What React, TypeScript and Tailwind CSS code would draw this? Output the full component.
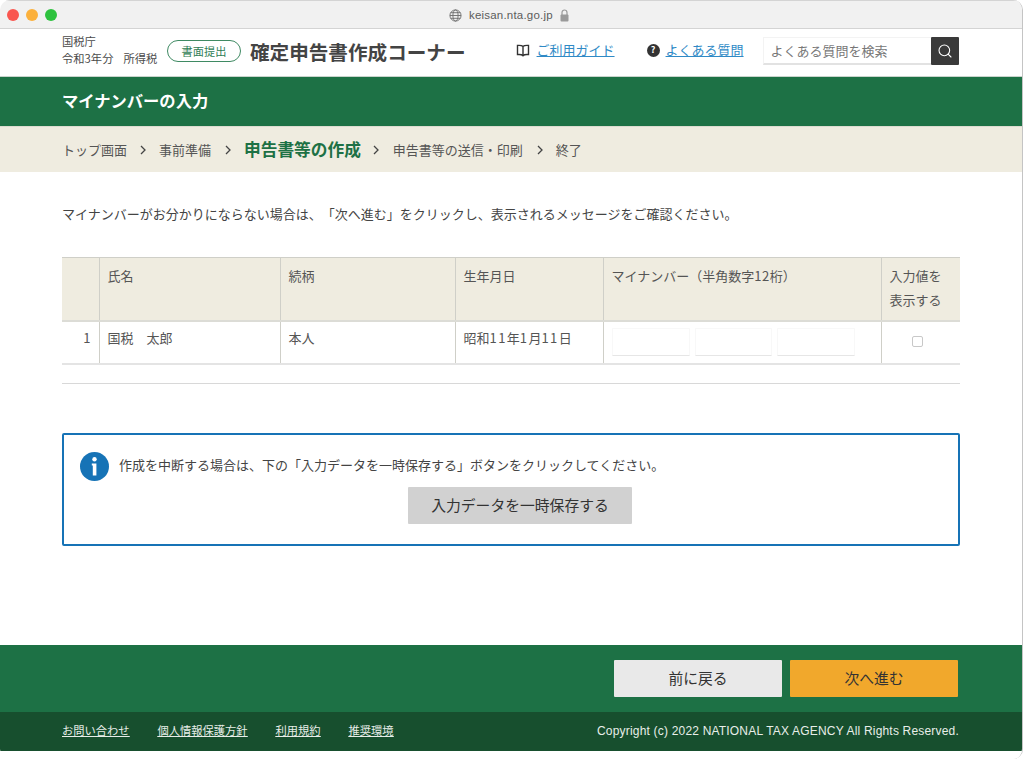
import { Search } from 'lucide-react';

const jp = '[font-family:"Noto_Sans_CJK_JP","Liberation_Sans",sans-serif]';

function Globe() {
  return (
    <svg width="13" height="13" viewBox="0 0 14 14" fill="none" stroke="#6e6e6e" strokeWidth="1">
      <circle cx="7" cy="7" r="6" />
      <ellipse cx="7" cy="7" rx="2.8" ry="6" />
      <path d="M1 7h12M1.8 4h10.4M1.8 10h10.4" />
    </svg>
  );
}

function Lock() {
  return (
    <svg width="9" height="13" viewBox="0 0 9 13" fill="none">
      <path d="M2 6V3.5a2.5 2.5 0 0 1 5 0V6" stroke="#9a9a9a" strokeWidth="1.2" />
      <rect x="0.5" y="5.5" width="8" height="7" rx="1" fill="#9a9a9a" />
    </svg>
  );
}

function BookIcon() {
  return (
    <svg width="14" height="13" viewBox="0 0 14 13" fill="none" stroke="#333" strokeWidth="1.4">
      <path d="M7 2.5C6 1.4 4 1.2 1.5 1.4v9.2c2.5-.2 4.5 0 5.5 1.1 1-1.1 3-1.3 5.5-1.1V1.4C10 1.2 8 1.4 7 2.5zM7 2.5v9.2" />
    </svg>
  );
}

function Arrow({ className }: { className: string }) {
  return (
    <svg className={className} width="6" height="10" viewBox="0 0 6 10" fill="none" stroke="#444" strokeWidth="1.3">
      <path d="M1 1l4 4-4 4" />
    </svg>
  );
}

function Dots() {
  return (
    <div className="flex gap-[7px]">
      <span className="w-3 h-3 rounded-full bg-[#f9564f]" />
      <span className="w-3 h-3 rounded-full bg-[#fbb03b]" />
      <span className="w-3 h-3 rounded-full bg-[#2ec23f]" />
    </div>
  );
}

const headCell = 'border-l border-[#cfcfc8] px-2 align-top font-normal text-left';
const bodyCell = 'border-l border-[#cfcfc8] px-2 align-top';

export default function App() {
  return (
    <div className={`w-[1024px] h-[759px] overflow-hidden bg-white ${jp} [text-spacing-trim:space-all] text-[#444]`}>
      <div className="h-[759px] mr-px border-r border-[#c4c4c4] rounded-t-[10px] rounded-b-[10px] overflow-hidden flex flex-col">
        {/* browser bar */}
        <div className="h-[29px] shrink-0 bg-[#f1f1f1] border-b border-t border-[#d4d4d4] pl-[7px] flex items-center relative">
          <Dots />
          <div className="absolute left-[449px] top-[7px] flex items-center gap-[7px] text-[11.5px] leading-[15px] text-[#5c5c5c] tracking-[0.2px] font-['Liberation_Sans',sans-serif]">
            <Globe />
            <span>keisan.nta.go.jp</span>
            <Lock />
          </div>
        </div>

        {/* header */}
        <header className="h-[48px] shrink-0 pl-[62px] flex items-center border-b border-[#c9d4cc]">
          <div className="w-[105px] text-[11.3px] leading-[17px] text-[#4a4a4a] mt-[-5px] whitespace-nowrap">
            <div>国税庁</div>
            <div>令和3年分<span className="ml-[10px]">所得税</span></div>
          </div>
          <div className="w-[74px] h-[22px] rounded-full border border-[#3f8a63] text-[#2f7d55] text-[11.2px] flex items-center justify-center mt-[-3px]">
            書面提出
          </div>
          <div className="ml-[9px] text-[19.6px] font-bold text-[#444] leading-none mt-[-1px] whitespace-nowrap">確定申告書作成コーナー</div>
          <div className="ml-[50px] flex items-center gap-[7px] mt-[-5px]">
            <BookIcon />
            <a className="text-[13px] leading-[16px] text-[#2f8ac6] underline">ご利用ガイド</a>
          </div>
          <div className="ml-[32px] flex items-center gap-[6px] mt-[-5px]">
            <span className="w-[13px] h-[13px] rounded-full bg-[#333] text-white text-[9px] font-bold flex items-center justify-center">?</span>
            <a className="text-[13px] leading-[16px] text-[#2f8ac6] underline">よくある質問</a>
          </div>
          <div className="ml-[19px] flex mt-[-3px] h-[28px]">
            <div className="w-[168px] bg-white border-b-2 border-[#e2e2e2] border-t border-l border-t-[#f3f3f3] border-l-[#f3f3f3] pl-[7px] text-[13px] text-[#777] flex items-center pt-[1px]">よくある質問を検索</div>
            <div className="w-[28px] bg-[#3a3a3a] flex items-center justify-center rounded-[1px]">
              <Search size={16} color="#ffffff" strokeWidth={1.6} />
            </div>
          </div>
        </header>

        {/* title */}
        <div className="h-[49px] shrink-0 bg-[#1d7145] pl-[62px] pb-[2px] flex items-center text-white text-[16.3px] font-bold">マイナンバーの入力</div>

        {/* steps */}
        <div className="h-[46px] shrink-0 bg-[#efece0] border-t border-[#dcdcd0] pl-[62px] flex items-center text-[13px] text-[#555] whitespace-nowrap">
          <span>トップ画面</span>
          <Arrow className="ml-[13px] mt-[1px]" />
          <span className="ml-[13px]">事前準備</span>
          <Arrow className="ml-[14px] mt-[1px]" />
          <span className="ml-[13px] text-[16.7px] font-bold text-[#1d7145]">申告書等の作成</span>
          <Arrow className="ml-[12px] mt-[1px]" />
          <span className="ml-[14px]">申告書等の送信・印刷</span>
          <Arrow className="ml-[14px] mt-[1px]" />
          <span className="ml-[13px]">終了</span>
        </div>

        {/* main */}
        <main className="flex-1 pl-[62px] pr-[63px]">
          <p className="mt-[33px] text-[13px] leading-[18px] text-[#444] whitespace-nowrap">
            マイナンバーがお分かりにならない場合は、「次へ進む」をクリックし、表示されるメッセージをご確認ください。
          </p>

          <table className="mt-[34px] w-[898px] table-fixed border-collapse text-[13px] text-[#555]">
            <colgroup>
              <col className="w-[37px]" />
              <col className="w-[181px]" />
              <col className="w-[175px]" />
              <col className="w-[148px]" />
              <col className="w-[278px]" />
              <col className="w-[79px]" />
            </colgroup>
            <thead>
              <tr className="h-[63px] bg-[#efece0] border-t border-b-2 border-t-[#cfcfc8] border-b-[#dcdcd6]">
                <th className="font-normal" />
                <th className={`${headCell} pt-[8px] leading-[20px]`}>氏名</th>
                <th className={`${headCell} pt-[8px] leading-[20px]`}>続柄</th>
                <th className={`${headCell} pt-[8px] leading-[20px]`}>生年月日</th>
                <th className={`${headCell} pt-[8px] leading-[20px]`}>マイナンバー（半角数字<span className="tracking-[0.5px]">12</span>桁）</th>
                <th className={`${headCell} leading-[24px] pt-[6px]`}>入力値を<br />表示する</th>
              </tr>
            </thead>
            <tbody>
              <tr className="h-[43px] border-b-2 border-[#e4e4e4]">
                <td className="text-right pr-[8px] align-top pt-[6px] leading-[20px]">1</td>
                <td className={`${bodyCell} pt-[6px] leading-[20px]`}>国税　太郎</td>
                <td className={`${bodyCell} pt-[6px] leading-[20px]`}>本人</td>
                <td className={`${bodyCell} pt-[6px] leading-[20px] whitespace-nowrap`}>
                  昭和<span className="tracking-[1.4px]">11</span>年<span className="tracking-[1.4px]">1</span>月<span className="tracking-[1.4px]">11</span>日
                </td>
                <td className={`${bodyCell} pt-[6px]`}>
                  <div className="flex gap-[5px]">
                    <div className="w-[78px] h-[28px] border border-[#f8f8f8] border-b-[#e6e6e6] rounded-[1px]" />
                    <div className="w-[77px] h-[28px] border border-[#f8f8f8] border-b-[#e6e6e6] rounded-[1px]" />
                    <div className="w-[78px] h-[28px] border border-[#f8f8f8] border-b-[#e6e6e6] rounded-[1px]" />
                  </div>
                </td>
                <td className={`${bodyCell} pt-[14px]`}>
                  <div className="w-[11px] h-[11px] ml-[22px] border border-[#c8c8c8] rounded-[2px] bg-white" />
                </td>
              </tr>
            </tbody>
          </table>

          <div className="mt-[18px] w-[898px] h-px bg-[#d8d8d8]" />

          {/* notice */}
          <div className="mt-[49px] w-[898px] h-[113px] border-2 border-[#1673b6] rounded-[2px] pl-[16px] pt-[17px]">
            <div className="flex items-center">
              <span className="w-[29px] h-[29px] rounded-full bg-[#1673b6] flex items-center justify-center shrink-0">
                <svg width="7" height="19" viewBox="0 0 7 19" fill="#fff">
                  <circle cx="3.5" cy="2.2" r="2.2" />
                  <path d="M0.8 6.5h4.6v12H1.8V8.6H.8z" />
                </svg>
              </span>
              <p className="ml-[10px] mt-[-3px] text-[13px] leading-[18px] text-[#444] whitespace-nowrap">
                作成を中断する場合は、下の「入力データを一時保存する」ボタンをクリックしてください。
              </p>
            </div>
            <button className="block ml-[328px] mt-[6px] w-[224px] h-[37px] bg-[#d1d1d1] rounded-[1px] text-[14.8px] text-[#333]">
              入力データを一時保存する
            </button>
          </div>
        </main>

        {/* nav */}
        <div className="h-[67px] shrink-0 bg-[#1d7145] pr-[64px] flex justify-end items-start pt-[15px] gap-[8px]">
          <button className="w-[168px] h-[37px] bg-[#e9e9e9] rounded-[1px] text-[14.8px] text-[#333]">前に戻る</button>
          <button className="w-[168px] h-[37px] bg-[#f1a82c] rounded-[1px] text-[14.8px] text-[#333]">次へ進む</button>
        </div>

        {/* footer */}
        <footer className="h-[39px] shrink-0 bg-[#174f2e] pl-[62px] pr-[63px] flex items-center justify-between text-[#e8eee9] text-[11.25px]">
          <div className="flex gap-[28px] underline mt-[-2px]">
            <a>お問い合わせ</a>
            <a>個人情報保護方針</a>
            <a>利用規約</a>
            <a>推奨環境</a>
          </div>
          <div className="font-['Liberation_Sans',sans-serif] text-[12px] tracking-[0.19px] mt-[-2px] whitespace-nowrap">
            Copyright (c) 2022 NATIONAL TAX AGENCY All Rights Reserved.
          </div>
        </footer>
        <div className="h-[8px] shrink-0 bg-white" />
      </div>
    </div>
  );
}
